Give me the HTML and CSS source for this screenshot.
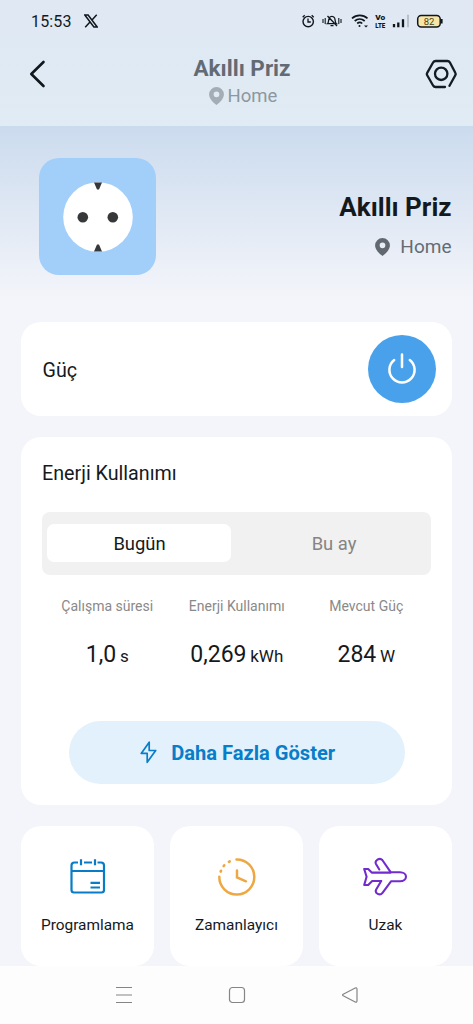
FILE: index.html
```html
<!DOCTYPE html>
<html lang="tr">
<head>
<meta charset="utf-8">
<title>Akıllı Priz</title>
<link rel="stylesheet" href="styles.css">
</head>
<body>
<div class="app">
  <header class="top">
    <div class="status">
      <span class="time">15:53</span>
      <svg class="x-logo" width="14" height="14" viewBox="0 0 14 14"><path d="M.8 1h3.300l9.100 12H9.900zM12.700.8 7.800 6.200M6 8 1.200 13.200" fill="none" stroke="#10161c" stroke-width="1.500"/></svg>
      <svg class="sys" width="144" height="20" viewBox="302 11 144 20" fill="none" stroke="#10161c">
        <circle cx="308.200" cy="21.600" r="5.200" stroke-width="1.400"/>
        <path d="M308 18.500v3.500h2.800M302.700 17.300l2-2M313.700 17.300l-2-2" stroke-width="1.300"/>
        <path d="M327.500 23.700c1.500-1 .8-4.800 1.900-6.100 1.100-1.700 3.900-1.700 5 0 1.100 1.300.4 5.100 1.900 6.100zM330.500 25.700h3M327.500 16l9.500 10" stroke-width="1.300"/>
        <path d="M323 19v4M325.200 18v6M338.800 18v6M341 19v4" stroke-width="1.100"/>
        <path d="M352 18.300c4.500-4 11-4 15.500 0M354.700 21c3-2.600 7-2.600 10 0M357.200 23.500c1.500-1.300 3.600-1.300 5 0" stroke-width="1.700"/>
        <circle cx="359.500" cy="26" r="1" fill="#10161c" stroke="none"/>
        <path d="M364 25.500h4l-2 2z" fill="#10161c" stroke="none"/>
        <g class="volte"><text x="375.300" y="20.300" textLength="10" lengthAdjust="spacingAndGlyphs">Vo</text><text x="375.300" y="27.700" textLength="10" lengthAdjust="spacingAndGlyphs">LTE</text></g>
        <path d="M394 27.300v-3.300M398.300 27.300v-4.800M403 27.300v-8" stroke-width="2.300"/>
        <path d="M408 27.300v-12.500" stroke="#b9c1c8" stroke-width="2"/>
        <rect x="417.700" y="15.500" width="22.500" height="11.500" rx="3.500" fill="#f7e6a6" stroke-width="1.500"/>
        <path d="M441.700 19v4.500" stroke-width="1.800"/>
        <text class="pct" x="429" y="24.600" text-anchor="middle">82</text>
      </svg>
    </div>
    <div class="nav">
      <svg class="back" width="18" height="28" viewBox="0 0 18 28"><path d="M14.500 2 2.300 14 14.500 26" fill="none" stroke="#0f171d" stroke-width="2.600" stroke-linecap="round" stroke-linejoin="round"/></svg>
      <div class="nav-title">
        <h1>Akıllı Priz</h1>
        <div class="place"><svg width="15" height="18" viewBox="0 0 14 17"><path fill="#a4adb5" fill-rule="evenodd" d="M7 0a7 7 0 0 1 7 7c0 4-4 7.500-7 10-3-2.500-7-6-7-10a7 7 0 0 1 7-7zm0 4.200a2.700 2.700 0 1 0 0 5.400 2.700 2.700 0 0 0 0-5.400z"/></svg><span>Home</span></div>
      </div>
      <svg class="settings" width="32" height="30" viewBox="0 0 32 30" fill="none" stroke="#131c23" stroke-width="2.300" stroke-linecap="round" stroke-linejoin="round"><path d="M20 28H10.500Q9 28 8.200 26.700L2.200 16.200Q1.500 15 2.200 13.800L8.200 3.300Q9 2 10.500 2h12q1.500 0 2.300 1.300l5.500 10.500q.7 1.200 0 2.400L24.500 26.800"/><circle cx="16.200" cy="14.800" r="6.200"/></svg>
    </div>
  </header>

  <section class="hero">
    <div class="device">
      <svg width="70" height="70" viewBox="0 0 70 70"><circle cx="35" cy="35" r="34.800" fill="#fff"/><g fill="#373839"><circle cx="19.800" cy="35.300" r="5.300"/><circle cx="49.800" cy="35.300" r="5.300"/><path d="M31 .5h8L36 7.600h-2zM31 69.500h8L36 62.400h-2z"/></g></svg>
    </div>
    <div class="device-info">
      <h2>Akıllı Priz</h2>
      <div class="place"><svg width="15" height="18" viewBox="0 0 14 17"><path fill="#61686f" fill-rule="evenodd" d="M7 0a7 7 0 0 1 7 7c0 4-4 7.500-7 10-3-2.500-7-6-7-10a7 7 0 0 1 7-7zm0 4.200a2.700 2.700 0 1 0 0 5.400 2.700 2.700 0 0 0 0-5.400z"/></svg><span>Home</span></div>
    </div>
  </section>

  <main class="content">
    <section class="card power">
      <span class="label">Güç</span>
      <button class="power-btn" aria-label="Güç"><svg width="30" height="32" viewBox="0 0 30 32" fill="none" stroke="#fff" stroke-width="2.500" stroke-linecap="round"><path d="M15 1.500v12.500M7.200 7a12.600 12.600 0 1 0 15.600 0"/></svg></button>
    </section>

    <section class="card energy">
      <h3 class="label">Enerji Kullanımı</h3>
      <div class="tabs"><span class="tab active">Bugün</span><span class="tab">Bu ay</span></div>
      <div class="stats">
        <div class="stat"><span class="name">Çalışma süresi</span><span class="value">1,0 <small>s</small></span></div>
        <div class="stat"><span class="name">Enerji Kullanımı</span><span class="value">0,269 <small>kWh</small></span></div>
        <div class="stat"><span class="name">Mevcut Güç</span><span class="value">284 <small>W</small></span></div>
      </div>
      <button class="more"><svg width="17" height="23" viewBox="0 0 17 23"><path d="M9.200 1.200 1.200 12.400h6v8.900l8.500-11.800H9.200z" fill="none" stroke="#087dc8" stroke-width="1.700" stroke-linejoin="round"/></svg><span>Daha Fazla Göster</span></button>
    </section>

    <section class="actions">
      <div class="card action">
        <svg width="46" height="42" viewBox="65 856 46 42" fill="none" stroke="#087cc6" stroke-width="2.200"><path d="M78 862.500h-3.500q-3 0-3 3v24.500q0 2.500 2.500 2.500h27.500q2.500 0 2.500-2.500v-24.500q0-3-3-3h-3.500M84 862.500h8M71.500 871H104M90.500 882.800h9.500M90.500 887.500h9.500"/><path d="M81 859.200v6M95 859.200v6"/></svg>
        <span>Programlama</span>
      </div>
      <div class="card action">
        <svg width="46" height="42" viewBox="213.500 856 46 42" fill="none" stroke="#eda844" stroke-width="2.500" stroke-linecap="round"><path d="M236 859.500a17.500 17.500 0 1 1-17.200 17.300M236.500 870.500v7l9 3.800"/><path d="m220.200 871.500.3-.7M223.200 866l.5-.6M228.500 861.900l.7-.4" stroke-width="2.700"/></svg>
        <span>Zamanlayıcı</span>
      </div>
      <div class="card action">
        <svg width="46" height="42" viewBox="364 856 46 42" fill="none" stroke="#722cce" stroke-width="2.100" stroke-linecap="round" stroke-linejoin="round"><path d="M380.300 869.500l-3.300-5.500c-1.800-3.500 3.700-6.900 6.300-4l8.500 12.300h9.200c3.500 0 6 2 6 4.500s-2.500 4.500-6 4.500h-9l-8.500 11.500c-2.500 3.500-8.200.5-6.300-3.300l5-8.500h-9l-4 4h-4l2.400-8.200-2.400-7.800h4l3.500 3.600H391.800"/></svg>
        <span>Uzak</span>
      </div>
    </section>
  </main>

  <footer class="sysnav">
    <svg width="18" height="18" viewBox="0 0 18 18"><path d="M1 1.500h16M1 9h16M1 16.500h16" stroke="#858585" stroke-width="1.200"/></svg>
    <svg width="18" height="18" viewBox="0 0 18 18"><rect x="1.500" y="1.500" width="15" height="15" rx="3" fill="none" stroke="#858585" stroke-width="1.200"/></svg>
    <svg width="18" height="18" viewBox="0 0 18 18"><path d="M2.200 8.200 14.200 2q1.800-.7 1.800 1.200v11.600q0 1.900-1.800 1.200L2.200 9.800q-1.300-.8 0-1.600z" fill="none" stroke="#858585" stroke-width="1.200"/></svg>
  </footer>
</div>
</body>
</html>
```
FILE: styles.css
```css
* { box-sizing: border-box; }
body { margin: 0; font-family: Roboto, "Noto Sans", sans-serif; color: #14191d; background: #f4f5fa; }
h1, h2, h3 { margin: 0; }
button { border: 0; padding: 0; font-family: inherit; }
svg { display: block; flex: none; }
.app { width: 473px; height: 1024px; overflow: hidden; display: flex; flex-direction: column; }

.top { height: 126px; flex: none; background: linear-gradient(#dfe8f3, #e0ebf4); }
.status { height: 42px; padding: 0 27px 0 31px; display: flex; align-items: center; }
.time { font-size: 16px; letter-spacing: .15px; }
.x-logo { margin-left: 12px; }
.sys { margin-left: auto; }
.volte { font: 900 7.5px Roboto, sans-serif; fill: #10161c; stroke: none; }
.pct { font: 9.5px Roboto, sans-serif; fill: #4a4325; stroke: none; }
.nav { height: 84px; padding: 17px 16px 0 29px; display: flex; justify-content: space-between; align-items: flex-start; }
.nav .back { margin-top: 1px; }
.nav-title { flex: 1; display: flex; flex-direction: column; align-items: center; padding-left: 12px; margin-top: -5px; }
.nav-title h1 { font-size: 22.5px; line-height: 28px; font-weight: 700; color: #626b75; }
.place { display: flex; align-items: center; }
.nav-title .place { gap: 4px; margin-left: 2px; margin-top: 1px; font-size: 18.5px; line-height: 26px; color: #8d979f; }

.hero { height: 174px; flex: none; padding: 32px 21.5px 0 39px; display: flex; justify-content: space-between; background: linear-gradient(#cbdbee, #f4f5fa); }
.device { width: 117px; height: 117px; border-radius: 20px; background: #a2cefa; display: grid; place-items: center; }
.device-info { display: flex; flex-direction: column; align-items: flex-end; padding-top: 32px; }
.device-info h2 { font-size: 26px; line-height: 34px; }
.device-info .place { gap: 10px; margin-top: 9px; font-size: 19px; line-height: 28px; color: #646b73; }

.content { flex: 1; min-height: 0; padding: 22px 21px 0; }
.card { background: #fff; border-radius: 20px; }
.label { font-size: 19.7px; line-height: 28px; font-weight: 400; }
.power { height: 94px; padding: 0 16px 0 21.5px; display: flex; align-items: center; justify-content: space-between; }
.power .label { padding-top: 4px; }
.power-btn { width: 68px; height: 68px; border-radius: 50%; background: #49a1eb; display: grid; place-items: center; }
.energy { height: 368px; margin-top: 21px; padding: 23px 21px 0; display: flex; flex-direction: column; }
.tabs { width: 389px; height: 63px; margin-top: 24px; padding: 12px 5px 13px; border-radius: 8px; background: #f1f1f1; display: grid; grid-template-columns: 184px 1fr; }
.tab { display: grid; place-items: center; font-size: 18.4px; color: #848484; border-radius: 7px; padding-top: 1px; }
.tab.active { color: #14191d; background: #fff; padding-left: 1px; }
.tab:last-child { padding-left: 11px; }
.stats { display: grid; grid-template-columns: repeat(3, 129.5px); margin: 20px 0 0 .5px; }
.stat { display: flex; flex-direction: column; align-items: center; white-space: nowrap; }
.name { font-size: 14px; line-height: 22px; color: #898989; }
.value { margin-top: 22px; font-size: 23px; line-height: 32px; }
.value small { font-size: 17px; margin-left: -2px; }
.more { width: 336px; height: 63px; margin: 49px 0 0 26.5px; padding-left: 2px; border-radius: 32px; background: #e2f1fc; color: #087dc8; display: flex; align-items: center; justify-content: center; gap: 14.5px; font-size: 20.1px; font-weight: 700; }
.actions { display: grid; grid-template-columns: repeat(3, 133px); gap: 16px; margin-top: 21px; }
.action { height: 140px; padding-top: 30px; display: flex; flex-direction: column; align-items: center; font-size: 15.4px; }
.action span { margin-top: 16px; line-height: 22px; }

.sysnav { height: 58px; flex: none; background: #fdfdfd; display: flex; justify-content: center; align-items: center; gap: 95px; }
```
